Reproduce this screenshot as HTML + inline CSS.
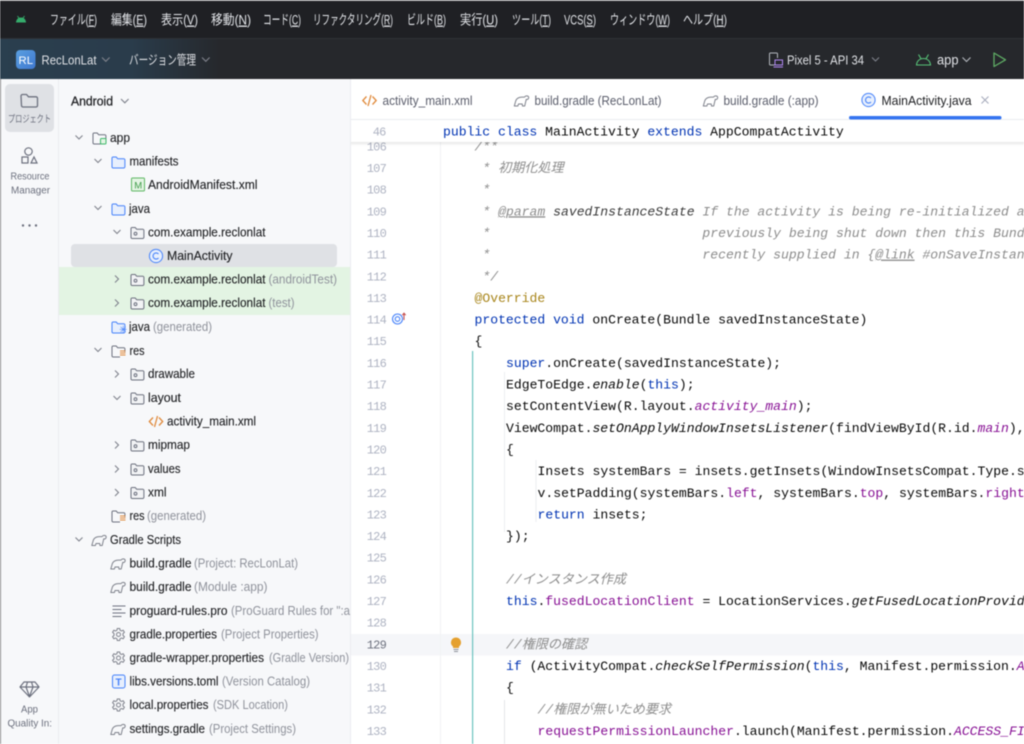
<!DOCTYPE html>
<html lang="ja"><head><meta charset="utf-8"><title>Android Studio</title>
<style>
html,body{margin:0;padding:0;background:#fff;width:1024px;height:744px;overflow:hidden}
svg{display:block;filter:blur(.42px)}
text{font-family:"Liberation Sans","Noto Sans CJK JP",sans-serif;white-space:pre}
.m{font-size:13.5px;fill:#e4e6ea}
.tb{font-size:13px;fill:#dfe1e5}
.n{font-size:13px;fill:#1e1f22;stroke:#1e1f22;stroke-width:.12}
.h{font-size:13px;fill:#8f929b}
.r{font-size:10px;fill:#6c707e}
.tab{font-size:13px;fill:#5a5d6b}
.code text,.code{font-family:"Liberation Mono","Noto Sans CJK JP",monospace;font-size:13.1px;fill:#080808}
.code .k{fill:#0033b3}
.code .f{fill:#871094}
.code .c{fill:#8c8c8c;font-style:italic}
.code .i{font-style:italic}
.code .fi{fill:#871094;font-style:italic}
.code .a{fill:#a8851a}
.code .d{fill:#3a3a3a;font-style:italic}
.code .u{fill:#8c8c8c;font-style:italic;text-decoration:underline}
.ln text,.ln{font-family:"Liberation Mono",monospace;font-size:12px;letter-spacing:-.8px;fill:#aeb3c2;text-anchor:end}
.ch{fill:none;stroke:#7f828c;stroke-width:1.1}
</style></head><body>
<svg width="1024" height="744" viewBox="0 0 1024 744" xmlns="http://www.w3.org/2000/svg">
<defs>
<linearGradient id="tg" x1="0" x2="1" y1="0" y2="0"><stop offset="0" stop-color="#2a3f4f"/><stop offset=".6" stop-color="#2a3c4b"/><stop offset="1" stop-color="#26282c"/></linearGradient>
<linearGradient id="rl" x1="0" x2="1" y1="0" y2="1"><stop offset="0" stop-color="#5a9fe0"/><stop offset="1" stop-color="#3f78d0"/></linearGradient>
<linearGradient id="sh" x1="0" x2="0" y1="0" y2="1"><stop offset="0" stop-color="#000" stop-opacity=".09"/><stop offset="1" stop-color="#000" stop-opacity="0"/></linearGradient>
<symbol id="pkg" viewBox="0 0 15 14"><path d="M1 3.200a1.200 1.200 0 0 1 1.200-1.200h3l1.500 1.700h6a1.200 1.200 0 0 1 1.200 1.200v6.900a1.200 1.200 0 0 1-1.200 1.200H2.200A1.200 1.200 0 0 1 1 11.800z" fill="#f2f3f5" stroke="#6c707e" stroke-width="1"/><circle cx="5.500" cy="8.200" r="1.400" fill="none" stroke="#6c707e"/></symbol>
<symbol id="fb" viewBox="0 0 15 14"><path d="M1 3.200a1.200 1.200 0 0 1 1.200-1.200h3l1.500 1.700h6a1.200 1.200 0 0 1 1.200 1.200v6.900a1.200 1.200 0 0 1-1.200 1.200H2.200A1.200 1.200 0 0 1 1 11.800z" fill="#e7effd" stroke="#4682fa" stroke-width="1"/></symbol>
<symbol id="fg" viewBox="0 0 15 14"><path d="M9 13H2.200A1.200 1.200 0 0 1 1 11.800V3.200a1.200 1.200 0 0 1 1.200-1.200h3l1.500 1.700h6A1.200 1.200 0 0 1 13.900 5v3" fill="none" stroke="#6c707e" stroke-width="1"/></symbol>
<symbol id="gr" viewBox="0 0 16 14"><path d="M.8 12.500L2.300 7.200C3.300 4.700 5.800 3.600 8.300 3.600h2.700C12 2 14.500 2 15.100 3.500 15.600 5 14 6.600 12.800 5.800L12 9l-.8 3.500H9l-.3-2H5l-.6 2z" fill="none" stroke="#7f828c" stroke-width="1" stroke-linejoin="round"/></symbol>
<symbol id="gear" viewBox="0 0 14 14"><path d="M5.800 1h2.400l.4 1.800 1.400.7 1.700-.7 1.200 2-1.400 1.300v1.800l1.400 1.300-1.200 2-1.700-.7-1.400.7-.4 1.800H5.800l-.4-1.800-1.400-.7-1.700.7-1.200-2 1.400-1.300V6.100L1.100 4.800l1.200-2 1.700.7 1.400-.7z" fill="none" stroke="#7f828c" stroke-width="1"/><circle cx="7" cy="7" r="2" fill="none" stroke="#7f828c"/></symbol>
<symbol id="cc" viewBox="0 0 15 15"><circle cx="7.500" cy="7.500" r="6.600" fill="#e7effd" stroke="#4682fa" stroke-width="1"/><path d="M10 5.500a3.100 3.100 0 1 0 0 4" fill="none" stroke="#4682fa" stroke-width="1.100"/></symbol>
<symbol id="xml" viewBox="0 0 16 14"><path d="M5 3L1.300 7 5 11M11 3l3.700 4L11 11M9.500 1.500l-3 11" fill="none" stroke="#e08a3c" stroke-width="1.300"/></symbol>
</defs>

<!-- chrome -->
<rect width="1024" height="79" fill="#1f2024"/>
<rect width="1024" height="1" fill="#a9a9a9"/>
<rect y="38" width="1024" height="41" fill="#26282c"/>
<rect y="38" width="220" height="41" fill="url(#tg)"/>
<rect y="38" width="1024" height="1" fill="#2f3136"/>
<path d="M16 22.500c.2-3 2-5 5-5s4.800 2 5 5z" fill="#3ddc84" opacity=".75"/>
<path d="M17.500 16l1.500 2.200M24.500 16L23 18.200" stroke="#3ddc84" stroke-width="1" opacity=".7"/>

<!-- menu -->
<text class="m" x="50" y="24.500" textLength="47" lengthAdjust="spacingAndGlyphs">ファイル(<tspan text-decoration="underline">F</tspan>)</text>
<text class="m" x="111" y="24.500" textLength="36" lengthAdjust="spacingAndGlyphs">編集(<tspan text-decoration="underline">E</tspan>)</text>
<text class="m" x="161" y="24.500" textLength="37" lengthAdjust="spacingAndGlyphs">表示(<tspan text-decoration="underline">V</tspan>)</text>
<text class="m" x="211" y="24.500" textLength="40" lengthAdjust="spacingAndGlyphs">移動(<tspan text-decoration="underline">N</tspan>)</text>
<text class="m" x="263" y="24.500" textLength="38" lengthAdjust="spacingAndGlyphs">コード(<tspan text-decoration="underline">C</tspan>)</text>
<text class="m" x="313" y="24.500" textLength="80" lengthAdjust="spacingAndGlyphs">リファクタリング(<tspan text-decoration="underline">R</tspan>)</text>
<text class="m" x="407" y="24.500" textLength="39" lengthAdjust="spacingAndGlyphs">ビルド(<tspan text-decoration="underline">B</tspan>)</text>
<text class="m" x="460" y="24.500" textLength="38" lengthAdjust="spacingAndGlyphs">実行(<tspan text-decoration="underline">U</tspan>)</text>
<text class="m" x="512" y="24.500" textLength="39" lengthAdjust="spacingAndGlyphs">ツール(<tspan text-decoration="underline">T</tspan>)</text>
<text class="m" x="564" y="24.500" textLength="32" lengthAdjust="spacingAndGlyphs">VCS(<tspan text-decoration="underline">S</tspan>)</text>
<text class="m" x="610" y="24.500" textLength="60" lengthAdjust="spacingAndGlyphs">ウィンドウ(<tspan text-decoration="underline">W</tspan>)</text>
<text class="m" x="683" y="24.500" textLength="44" lengthAdjust="spacingAndGlyphs">ヘルプ(<tspan text-decoration="underline">H</tspan>)</text>

<!-- toolbar -->
<rect x="16" y="50" width="19.500" height="19" rx="4" fill="url(#rl)"/>
<text x="18.500" y="64" font-size="11" fill="#fff" textLength="14.500" lengthAdjust="spacingAndGlyphs">RL</text>
<text class="tb" x="41.500" y="64.500" textLength="55" lengthAdjust="spacingAndGlyphs">RecLonLat</text>
<path d="M102 57.500l3.800 3.800 3.800-3.800" class="ch"/>
<text class="tb" x="129" y="64.500" textLength="67" lengthAdjust="spacingAndGlyphs">バージョン管理</text>
<path d="M202 57.500l3.800 3.800 3.800-3.800" class="ch"/>
<path d="M775 65h-4.500a1 1 0 0 1-1-1V54a1 1 0 0 1 1-1h6a1 1 0 0 1 1 1v4" fill="none" stroke="#b4b8bf" stroke-width="1"/>
<rect x="775" y="60" width="7.500" height="5" fill="none" stroke="#b189f5" stroke-width="1"/>
<path d="M773.500 67h9.500" stroke="#b189f5"/>
<text class="tb" x="787" y="64.500" textLength="77" lengthAdjust="spacingAndGlyphs">Pixel 5 - API 34</text>
<path d="M872 57.500l3.500 3.500 3.500-3.500" class="ch"/>
<path d="M916.500 65c.3-4 3.200-6.500 7-6.500s6.700 2.500 7 6.500z" fill="none" stroke="#57c278" stroke-width="1.100"/>
<path d="M918.500 54.500l2.500 4.200M928.500 54.500l-2.500 4.200" stroke="#57c278" stroke-width="1.100"/>
<text x="937" y="64.500" font-size="13.500" fill="#dfe1e5" textLength="21.500" lengthAdjust="spacingAndGlyphs">app</text>
<path d="M962.500 57.500l4 4 4-4" fill="none" stroke="#b4b8bf" stroke-width="1.100"/>
<path d="M994 53v13.500l11.500-6.700z" fill="none" stroke="#5fad65" stroke-width="1.300" stroke-linejoin="round"/>

<!-- panels -->
<rect x="0" y="79" width="350" height="665" fill="#f7f8fa"/>
<rect x="0" y="79" width="1" height="665" fill="#8a8a8a"/>
<rect x="58" y="79" width="1" height="665" fill="#ebecf0"/>
<rect x="350" y="79" width="1" height="665" fill="#ebecf0"/>

<!-- rail -->
<rect x="5" y="84" width="49" height="48" rx="5" fill="#dfe1e5"/>
<path d="M21 96a1.500 1.500 0 0 1 1.500-1.500h4l2 2.300h7.500a1.500 1.500 0 0 1 1.500 1.500v7.200a1.500 1.500 0 0 1-1.500 1.500h-13a1.500 1.500 0 0 1-1.500-1.500z" fill="none" stroke="#6c707e" stroke-width="1.300"/>
<text class="r" x="8" y="122.500" textLength="43" lengthAdjust="spacingAndGlyphs">プロジェクト</text>
<circle cx="28.500" cy="151.500" r="3.700" fill="none" stroke="#6c707e" stroke-width="1.200"/>
<rect x="22" y="157" width="6" height="6" fill="none" stroke="#6c707e" stroke-width="1.200"/>
<path d="M31 163l3-6 3 6z" fill="none" stroke="#6c707e" stroke-width="1.200"/>
<text class="r" x="10.500" y="179.500" textLength="39" lengthAdjust="spacingAndGlyphs">Resource</text>
<text class="r" x="11" y="193.500" textLength="39" lengthAdjust="spacingAndGlyphs">Manager</text>
<circle cx="23" cy="225.500" r="1.200" fill="#6c707e"/><circle cx="29.500" cy="225.500" r="1.200" fill="#6c707e"/><circle cx="36" cy="225.500" r="1.200" fill="#6c707e"/>
<path d="M24 682h11l4 5-9.500 10L20 687zM20.500 687h18M26 687l3.500 9.500L33 687M26 687l1.500-5M33 687l-1.500-5" fill="none" stroke="#6c707e" stroke-width="1.200" stroke-linejoin="round"/>
<text class="r" x="21" y="712.500" textLength="17" lengthAdjust="spacingAndGlyphs">App</text>
<text class="r" x="7.500" y="726.500" textLength="44.500" lengthAdjust="spacingAndGlyphs">Quality In:</text>

<!-- tree header -->
<text class="n" x="71" y="105.500" textLength="42" lengthAdjust="spacingAndGlyphs" style="stroke-width:.25">Android</text>
<path d="M121 99l3.800 3.800 3.800-3.800" class="ch"/>

<!-- tree backgrounds -->
<rect x="59" y="267" width="291" height="48" fill="#e3f4e3"/>
<rect x="71" y="244" width="266" height="23" rx="4" fill="#dfe1e5"/>

<!-- tree chevrons -->
<g class="ch">
<path d="M75.500 135.500l3.500 3.500 3.500-3.500"/><path d="M94.500 159l3.500 3.500 3.500-3.500"/><path d="M94.500 206l3.500 3.500 3.500-3.500"/><path d="M113.500 230l3.500 3.500 3.500-3.500"/>
<path d="M115 275.500l3.500 3.500-3.500 3.500"/><path d="M115 299.500l3.500 3.500-3.500 3.500"/>
<path d="M94.500 348l3.500 3.500 3.500-3.500"/><path d="M115 370.500l3.500 3.500-3.500 3.500"/><path d="M113.500 396l3.500 3.500 3.500-3.500"/>
<path d="M115 441.500l3.500 3.500-3.500 3.500"/><path d="M115 465.500l3.500 3.500-3.500 3.500"/><path d="M115 489l3.500 3.500-3.500 3.500"/>
<path d="M75.500 537.500l3.500 3.500 3.500-3.500"/>
</g>

<!-- tree icons -->
<use href="#fg" x="92" y="131" width="15" height="14"/><rect x="100.500" y="138.500" width="5.500" height="5.500" rx="1" fill="#e3f4e3" stroke="#3fb96b"/>
<use href="#fb" x="111" y="155" width="15" height="14"/>
<rect x="131.500" y="178" width="13" height="13" rx="1" fill="#e3f4e3" stroke="#5fb865"/><text x="134.200" y="188.500" font-size="9.500" fill="#3f9c4a">M</text>
<use href="#fb" x="111" y="202" width="15" height="14"/>
<use href="#pkg" x="130" y="225.500" width="15" height="14"/>
<use href="#cc" x="148.500" y="248.500" width="15" height="15"/>
<use href="#pkg" x="130" y="272.500" width="15" height="14"/>
<use href="#pkg" x="130" y="296" width="15" height="14"/>
<use href="#fb" x="111" y="320" width="15" height="14"/><text x="119" y="333" font-size="10" fill="#4682fa">✳</text>
<use href="#fg" x="111" y="344" width="15" height="14"/><path d="M120 351h5.500M120 353h5.500M120 355h5.500" stroke="#e08a3c" stroke-width="1"/>
<use href="#pkg" x="130" y="367" width="15" height="14"/>
<use href="#pkg" x="130" y="391" width="15" height="14"/>
<use href="#xml" x="148" y="414.500" width="16" height="14"/>
<use href="#pkg" x="130" y="438" width="15" height="14"/>
<use href="#pkg" x="130" y="462" width="15" height="14"/>
<use href="#pkg" x="130" y="485.500" width="15" height="14"/>
<use href="#fg" x="111" y="509" width="15" height="14"/><path d="M120 516h5.500M120 518h5.500M120 520h5.500" stroke="#e08a3c" stroke-width="1"/>
<use href="#gr" x="91" y="533" width="16" height="14"/>
<use href="#gr" x="110" y="556.500" width="16" height="14"/>
<use href="#gr" x="110" y="580" width="16" height="14"/>
<path d="M112.500 606h13M112.500 609.500h9M112.500 613h13M112.500 616.500h9" stroke="#6c707e" stroke-width="1"/>
<use href="#gear" x="111.500" y="627.500" width="14" height="14"/>
<use href="#gear" x="111.500" y="651" width="14" height="14"/>
<rect x="112.500" y="675" width="12.500" height="13" rx="2" fill="#e7effd" stroke="#4682fa"/><text x="115.500" y="685.500" font-size="10" font-weight="bold" fill="#4682fa">T</text>
<use href="#gear" x="111.500" y="698" width="14" height="14"/>
<use href="#gr" x="110" y="722" width="16" height="14"/>

<!-- tree text -->
<text class="n" x="110" y="142" textLength="20" lengthAdjust="spacingAndGlyphs">app</text>
<text class="n" x="129.500" y="165.700" textLength="49" lengthAdjust="spacingAndGlyphs">manifests</text>
<text class="n" x="148" y="189" textLength="109.500" lengthAdjust="spacingAndGlyphs">AndroidManifest.xml</text>
<text class="n" x="129" y="213" textLength="21" lengthAdjust="spacingAndGlyphs">java</text>
<text class="n" x="148" y="236.500" textLength="117.500" lengthAdjust="spacingAndGlyphs">com.example.reclonlat</text>
<text class="n" x="167" y="260" textLength="65.500" lengthAdjust="spacingAndGlyphs">MainActivity</text>
<text class="n" x="148" y="283.500" textLength="117.500" lengthAdjust="spacingAndGlyphs">com.example.reclonlat</text>
<text class="h" x="268.500" y="283.500" textLength="68.500" lengthAdjust="spacingAndGlyphs">(androidTest)</text>
<text class="n" x="148" y="307" textLength="117.500" lengthAdjust="spacingAndGlyphs">com.example.reclonlat</text>
<text class="h" x="268.500" y="307" textLength="26" lengthAdjust="spacingAndGlyphs">(test)</text>
<text class="n" x="129" y="331" textLength="21" lengthAdjust="spacingAndGlyphs">java</text>
<text class="h" x="153" y="331" textLength="59" lengthAdjust="spacingAndGlyphs">(generated)</text>
<text class="n" x="129.500" y="355" textLength="15" lengthAdjust="spacingAndGlyphs">res</text>
<text class="n" x="148" y="378" textLength="47" lengthAdjust="spacingAndGlyphs">drawable</text>
<text class="n" x="148" y="402" textLength="33" lengthAdjust="spacingAndGlyphs">layout</text>
<text class="n" x="167" y="425.500" textLength="89" lengthAdjust="spacingAndGlyphs">activity_main.xml</text>
<text class="n" x="148" y="449" textLength="42" lengthAdjust="spacingAndGlyphs">mipmap</text>
<text class="n" x="148" y="473" textLength="32.500" lengthAdjust="spacingAndGlyphs">values</text>
<text class="n" x="148" y="496.500" textLength="18.500" lengthAdjust="spacingAndGlyphs">xml</text>
<text class="n" x="129.500" y="520" textLength="15" lengthAdjust="spacingAndGlyphs">res</text>
<text class="h" x="147" y="520" textLength="59" lengthAdjust="spacingAndGlyphs">(generated)</text>
<text class="n" x="110" y="544" textLength="71" lengthAdjust="spacingAndGlyphs">Gradle Scripts</text>
<text class="n" x="129.500" y="567.500" textLength="62" lengthAdjust="spacingAndGlyphs">build.gradle</text>
<text class="h" x="194" y="567.500" textLength="104" lengthAdjust="spacingAndGlyphs">(Project: RecLonLat)</text>
<text class="n" x="129.500" y="591" textLength="62" lengthAdjust="spacingAndGlyphs">build.gradle</text>
<text class="h" x="194" y="591" textLength="73.500" lengthAdjust="spacingAndGlyphs">(Module :app)</text>
<text class="n" x="129.500" y="615" textLength="98" lengthAdjust="spacingAndGlyphs">proguard-rules.pro</text>
<text class="h" x="231" y="615" textLength="119" lengthAdjust="spacingAndGlyphs">(ProGuard Rules for ":a</text>
<text class="n" x="129.500" y="638.500" textLength="87.500" lengthAdjust="spacingAndGlyphs">gradle.properties</text>
<text class="h" x="221" y="638.500" textLength="97.500" lengthAdjust="spacingAndGlyphs">(Project Properties)</text>
<text class="n" x="129.500" y="662" textLength="134.500" lengthAdjust="spacingAndGlyphs">gradle-wrapper.properties</text>
<text class="h" x="269" y="662" textLength="80" lengthAdjust="spacingAndGlyphs">(Gradle Version)</text>
<text class="n" x="129.500" y="685.500" textLength="89" lengthAdjust="spacingAndGlyphs">libs.versions.toml</text>
<text class="h" x="222" y="685.500" textLength="88" lengthAdjust="spacingAndGlyphs">(Version Catalog)</text>
<text class="n" x="129.500" y="709" textLength="79" lengthAdjust="spacingAndGlyphs">local.properties</text>
<text class="h" x="213" y="709" textLength="75" lengthAdjust="spacingAndGlyphs">(SDK Location)</text>
<text class="n" x="129.500" y="733" textLength="75.500" lengthAdjust="spacingAndGlyphs">settings.gradle</text>
<text class="h" x="209" y="733" textLength="87" lengthAdjust="spacingAndGlyphs">(Project Settings)</text>

<!-- editor -->
<rect x="351" y="79" width="673" height="665" fill="#fff"/>
<rect x="351" y="634" width="673" height="21.500" fill="#f5f6f9"/>
<rect x="440" y="120" width="1" height="624" fill="#f1f2f4"/>
<rect x="472" y="351" width="1.200" height="393" fill="#6cc3bf"/>
<rect x="504" y="700" width="1" height="44" fill="#e4e5e9"/>
<rect x="504" y="372" width="1" height="160" fill="#eceef1"/>
<rect x="535.500" y="460" width="1" height="62" fill="#eceef1"/>

<g class="ln">
<text x="386" y="150.400">106</text><text x="386" y="172">107</text><text x="386" y="193.700">108</text><text x="386" y="215.300">109</text><text x="386" y="237">110</text><text x="386" y="258.600">111</text><text x="386" y="280.300">112</text><text x="386" y="301.900">113</text><text x="386" y="323.600">114</text><text x="386" y="345.200">115</text><text x="386" y="366.900">116</text><text x="386" y="388.500">117</text><text x="386" y="410.200">118</text><text x="386" y="431.800">119</text><text x="386" y="453.500">120</text><text x="386" y="475.100">121</text><text x="386" y="496.800">122</text><text x="386" y="518.400">123</text><text x="386" y="540.100">124</text><text x="386" y="561.700">125</text><text x="386" y="583.400">126</text><text x="386" y="605">127</text><text x="386" y="626.700">128</text><text x="386" y="648.300" style="fill:#6c707e">129</text><text x="386" y="670">130</text><text x="386" y="691.600">131</text><text x="386" y="713.300">132</text><text x="386" y="734.900">133</text>
</g>

<!-- gutter icons -->
<circle cx="397.500" cy="319" r="5" fill="none" stroke="#4682fa" stroke-width="1.100"/><circle cx="397.500" cy="319" r="2.300" fill="none" stroke="#4682fa" stroke-width="1.100"/>
<path d="M404 320v-6.500M402.300 315.200l1.700-2 1.700 2" fill="none" stroke="#c24a4a" stroke-width="1"/>
<path d="M456 637.500a5 5 0 0 1 3 9v1.500h-6v-1.500a5 5 0 0 1 3-9z" fill="#e5a02e"/><path d="M453.500 649.500h5M454 651.500h4" stroke="#8f929b" stroke-width="1"/>

<g class="code">
<text x="474.500" y="150.400" class="c">/**</text>
<text x="482.400" y="172" class="c">* 初期化処理</text>
<text x="482.400" y="193.700" class="c">*</text>
<text x="482.400" y="215.300" class="c">* <tspan class="u">@param</tspan> <tspan class="d">savedInstanceState</tspan> If the activity is being re-initialized a</text>
<text x="482.400" y="237" class="c">*                           previously being shut down then this Bund</text>
<text x="482.400" y="258.600" class="c">*                           recently supplied in {<tspan class="u">@link</tspan> #onSaveInstan</text>
<text x="482.400" y="280.300" class="c">*/</text>
<text x="474.500" y="301.900" class="a">@Override</text>
<text x="474.500" y="323.600"><tspan class="k">protected void</tspan> onCreate(Bundle savedInstanceState)</text>
<text x="474.500" y="345.200">{</text>
<text x="506" y="366.900"><tspan class="k">super</tspan>.onCreate(savedInstanceState);</text>
<text x="506" y="388.500">EdgeToEdge.<tspan class="i">enable</tspan>(<tspan class="k">this</tspan>);</text>
<text x="506" y="410.200">setContentView(R.layout.<tspan class="fi">activity_main</tspan>);</text>
<text x="506" y="431.800">ViewCompat.<tspan class="i">setOnApplyWindowInsetsListener</tspan>(findViewById(R.id.<tspan class="fi">main</tspan>),</text>
<text x="506" y="453.500">{</text>
<text x="537.500" y="475.100">Insets systemBars = insets.getInsets(WindowInsetsCompat.Type.s</text>
<text x="537.500" y="496.800">v.setPadding(systemBars.<tspan class="f">left</tspan>, systemBars.<tspan class="f">top</tspan>, systemBars.<tspan class="f">right</tspan></text>
<text x="537.500" y="518.400"><tspan class="k">return</tspan> insets;</text>
<text x="506" y="540.100">});</text>
<text x="506" y="583.400" class="c">//インスタンス作成</text>
<text x="506" y="605"><tspan class="k">this</tspan>.<tspan class="f">fusedLocationClient</tspan> = LocationServices.<tspan class="i">getFusedLocationProvid</tspan></text>
<text x="506" y="648.300" class="c">//権限の確認</text>
<text x="506" y="670"><tspan class="k">if</tspan> (ActivityCompat.<tspan class="i">checkSelfPermission</tspan>(<tspan class="k">this</tspan>, Manifest.permission.<tspan class="fi">A</tspan></text>
<text x="506" y="691.600">{</text>
<text x="537.500" y="713.300" class="c">//権限が無いため要求</text>
<text x="537.500" y="734.900"><tspan class="f">requestPermissionLauncher</tspan>.launch(Manifest.permission.<tspan class="fi">ACCESS_FI</tspan></text>
</g>

<!-- sticky -->
<rect x="351" y="120" width="673" height="22" fill="#fff"/>
<rect x="351" y="142" width="673" height="4" fill="url(#sh)"/>
<g class="ln"><text x="385.500" y="135.400">46</text></g>
<g class="code"><text x="443" y="135.400"><tspan class="k">public class</tspan> MainActivity <tspan class="k">extends</tspan> AppCompatActivity</text></g>

<!-- tabs -->
<rect x="351" y="79" width="673" height="41" fill="#fff"/>
<rect x="351" y="119" width="673" height="1" fill="#ebecf0"/>
<use href="#xml" x="361.500" y="93.500" width="16" height="14"/>
<text class="tab" x="382.500" y="105" textLength="90" lengthAdjust="spacingAndGlyphs">activity_main.xml</text>
<use href="#gr" x="513.500" y="93.500" width="16" height="14"/>
<text class="tab" x="534.500" y="105" textLength="127" lengthAdjust="spacingAndGlyphs">build.gradle (RecLonLat)</text>
<use href="#gr" x="702.500" y="93.500" width="16" height="14"/>
<text class="tab" x="723.500" y="105" textLength="95" lengthAdjust="spacingAndGlyphs">build.gradle (:app)</text>
<use href="#cc" x="861" y="92.500" width="15" height="15"/>
<text class="tab" x="881.500" y="105" textLength="90" lengthAdjust="spacingAndGlyphs" style="fill:#1e1f22">MainActivity.java</text>
<path d="M981.500 96.500l7 7M988.500 96.500l-7 7" stroke="#a8adbd" stroke-width="1.100"/>
<rect x="849" y="116" width="152.500" height="3.500" rx="1.700" fill="#3574f0"/>
</svg>
</body></html>
